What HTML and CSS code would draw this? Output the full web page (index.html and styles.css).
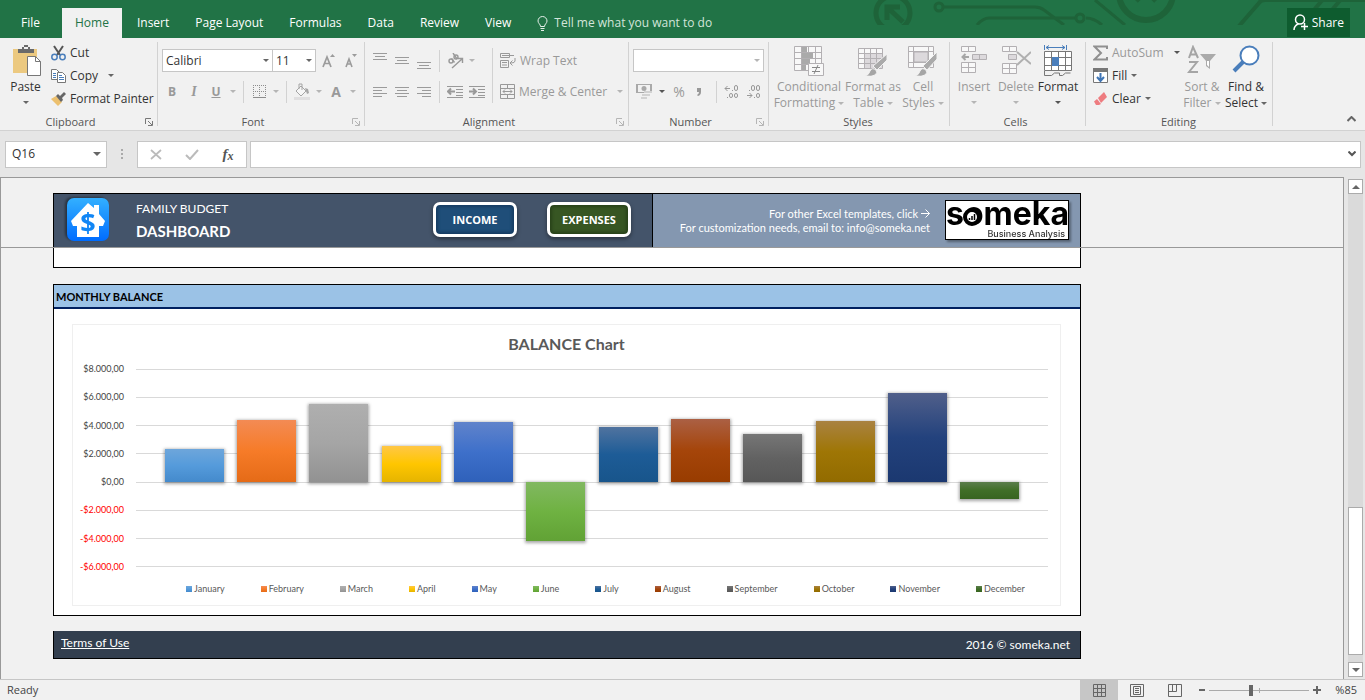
FILE: index.html
```html
<!DOCTYPE html>
<html lang="en">
<head>
<meta charset="utf-8">
<title>Family Budget Dashboard</title>
<link rel="stylesheet" href="styles.css">
</head>
<body>
<header class="titlebar">
  <svg class="circuit" width="495" height="25" viewBox="0 0 495 25" fill="none" stroke="#1e6339" stroke-width="3" aria-hidden="true">
    <circle cx="23" cy="13" r="17" stroke-width="5"/>
    <path d="M17 20V7h13M17 7l16 15" stroke-width="5"/>
    <circle cx="69" cy="7" r="4"/><path d="M73 7h92q5 0 9 3l20 15M107 25q6-7 12-7h87M216 18q8 0 16 7M225 0l30 25M213 18"/>
    <circle cx="210" cy="18" r="4"/>
    <circle cx="276" cy="-7" r="27" stroke-width="6"/><path d="M266 1l6-6M286 1l-6-6" stroke-width="5"/>
    <path d="M369 26l20-23q2-3 6-3h100M444 10l10-12M462 10l10-12" stroke-width="4"/>
  </svg>
  <nav class="tabs">
    <button class="tab tab-file">File</button>
    <button class="tab tab-on">Home</button>
    <button class="tab">Insert</button>
    <button class="tab">Page Layout</button>
    <button class="tab">Formulas</button>
    <button class="tab">Data</button>
    <button class="tab">Review</button>
    <button class="tab">View</button>
    <button class="tab tell">
      <svg width="11" height="15" viewBox="0 0 11 15" fill="none" stroke="#e6f0ea"><path d="M3.500 10.500C3.500 8 1 7.500 1 5a4.500 4.500 0 0 1 9 0c0 2.500-2.500 3-2.500 5.500z"/><path d="M3.500 12.500h4M4 14.500h3"/></svg>
      Tell me what you want to do
    </button>
  </nav>
  <button class="share">
    <svg width="15" height="17" viewBox="0 0 15 17" fill="none" stroke="#fff" stroke-width="1.500"><circle cx="7" cy="5.500" r="4.500"/><path d="M1 16c0-3 2-5 4.500-6.200M8 12.500h7M11.500 9v7"/></svg>
    Share
  </button>
</header>

<section class="ribbon">
  <div class="group g-clip">
    <div class="group-body">
      <button class="big big-paste">
        <svg width="30" height="31" viewBox="0 0 30 31"><path d="M2 4h24v24H2z" fill="#ecc980"/><path d="M7 4h4V2h2V0h4v2h2v2h4v4H7z" fill="#6a6a6a"/><path d="M13 2h4v2h-4z" fill="#f1f1f1"/><path d="M16.500 11.500h8l5 5v14h-13z" fill="#fff" stroke="#777"/><path d="M24.500 11.500v5h5" fill="none" stroke="#777"/></svg>
        Paste<i class="caret"></i>
      </button>
      <div class="stack">
        <button class="line"><svg width="15" height="16" viewBox="0 0 15 16" fill="none"><path d="M3 1l6 9M12 1L6 10" stroke="#555" stroke-width="2"/><circle cx="3.500" cy="12" r="2.700" stroke="#4a7ebb" stroke-width="1.500"/><circle cx="11.500" cy="12" r="2.700" stroke="#4a7ebb" stroke-width="1.500"/></svg>Cut</button>
        <button class="line"><svg width="15" height="14" viewBox="0 0 15 14" fill="#fff" stroke="#777"><path d="M.5.500h5l3 3v7h-8z"/><path d="M6.500 3.500h5l3 3v7h-8z"/><path d="M2 4.500h3M2 6.500h3M2 8.500h3M8 8.500h5M8 10.500h5M8 6.500h3" stroke="#4a7ebb"/></svg>Copy <i class="caret far"></i></button>
        <button class="line"><svg width="15" height="14" viewBox="0 0 15 14"><path d="M0 7l5-3 6 6-4 4z" fill="#ecc06f"/><path d="M5 4l2-2 2 2 4-4 2 2-4 4 1 2-2 2z" fill="#666"/></svg>Format Painter</button>
      </div>
    </div>
    <div class="group-name">Clipboard<svg class="launch" width="8" height="8" viewBox="0 0 8 8" fill="none" stroke="#777"><path d="M.500 6V.500H6M3 3l4 4M7.500 3v4.500H3"/></svg></div>
  </div>

  <div class="group g-font off">
    <div class="group-body col">
      <div class="row">
        <span class="pick pick-font"><select aria-label="Font"><option>Calibri</option></select></span><span class="pick pick-size"><select aria-label="Font size"><option>11</option></select></span>
        <button class="tool tool-A" aria-label="Increase font size"><svg width="16" height="16" viewBox="0 0 16 16"><path d="M2 14L6 4l4 10M3.500 10.500h5" fill="none" stroke="#9b9b9b" stroke-width="1.700"/><path d="M9 4l2.500-3L14 4z" fill="#9b9b9b"/></svg></button>
        <button class="tool" aria-label="Decrease font size"><svg width="16" height="16" viewBox="0 0 16 16"><path d="M3 14l3-8 3 8M4 11h4" fill="none" stroke="#9b9b9b" stroke-width="1.600"/><path d="M9 1l2.500 3L14 1z" fill="#9b9b9b"/></svg></button>
      </div>
      <div class="row">
        <button class="tool bold">B</button><button class="tool ital">I</button><button class="tool bold under">U</button><button class="mini" aria-label="Underline styles"><i class="caret"></i></button>
        <i class="sep"></i>
        <button class="tool" aria-label="Borders"><svg width="13" height="13" viewBox="0 0 13 13" fill="none" stroke="#8d8d8d"><path d="M.500 0v12M6.500 0v12M12.500 0v12M0 .500h13M0 6.500h13" stroke-dasharray="1 1"/><path d="M0 12.500h13"/></svg></button><button class="mini" aria-label="Border styles"><i class="caret"></i></button>
        <i class="sep"></i>
        <button class="tool" aria-label="Fill colour"><svg width="16" height="17" viewBox="0 0 16 17"><path d="M2 8l5-5 5 5-5 5z" fill="#f6f6f6" stroke="#a5a5a5"/><path d="M5 6V1h3v6" fill="none" stroke="#a5a5a5"/><path d="M11 5l3 1 1 4-2 1z" fill="#a5a5a5"/><path d="M0 14h16v3H0z" fill="#e0dfe0"/></svg></button><button class="mini" aria-label="Fill colours"><i class="caret"></i></button>
        <button class="tool bold big-a">A</button><button class="mini" aria-label="Font colours"><i class="caret"></i></button>
      </div>
    </div>
    <div class="group-name">Font<svg class="launch" width="8" height="8" viewBox="0 0 8 8" fill="none" stroke="#b5b5b5"><path d="M.500 6V.500H6M3 3l4 4M7.500 3v4.500H3"/></svg></div>
  </div>

  <div class="group g-align off">
    <div class="group-body">
      <div class="col">
        <div class="row">
          <button class="tool" aria-label="Top align"><svg width="14" height="18" viewBox="0 0 14 18" stroke="#9b9b9b"><path d="M0 1.500h14M2 4.500h10M0 7.500h14"/></svg></button>
          <button class="tool" aria-label="Middle align"><svg width="14" height="18" viewBox="0 0 14 18" stroke="#9b9b9b"><path d="M0 5.500h14M2 8.500h10M0 11.500h14"/></svg></button>
          <button class="tool" aria-label="Bottom align"><svg width="14" height="18" viewBox="0 0 14 18" stroke="#9b9b9b"><path d="M0 10.500h14M2 13.500h10M0 16.500h14"/></svg></button>
          <i class="sep"></i>
          <button class="tool" aria-label="Orientation"><svg width="17" height="16" viewBox="0 0 17 16" fill="none" stroke="#999" stroke-width="1.400"><circle cx="4" cy="8" r="2"/><path d="M4.500 5.500l3 4M6 0l4 6"/><circle cx="9" cy="4" r="2"/><path d="M5 15L15 6M11 5.500h4.500V10"/></svg></button><button class="mini" aria-label="Orientation options"><i class="caret"></i></button>
        </div>
        <div class="row">
          <button class="tool" aria-label="Align left"><svg width="14" height="12" viewBox="0 0 14 12" stroke="#9b9b9b"><path d="M0 1.500h14M0 4.500h9M0 7.500h14M0 10.500h9"/></svg></button>
          <button class="tool" aria-label="Center"><svg width="14" height="12" viewBox="0 0 14 12" stroke="#9b9b9b"><path d="M0 1.500h14M2 4.500h10M0 7.500h14M2 10.500h10"/></svg></button>
          <button class="tool" aria-label="Align right"><svg width="14" height="12" viewBox="0 0 14 12" stroke="#9b9b9b"><path d="M0 1.500h14M5 4.500h9M0 7.500h14M5 10.500h9"/></svg></button>
          <i class="sep"></i>
          <button class="tool" aria-label="Decrease indent"><svg width="16" height="14" viewBox="0 0 16 14" stroke="#999" fill="none"><path d="M0 1.500h16M9 4.500h7M9 7.500h7M9 10.500h7M0 12.500h16"/><path d="M1 6.500h7M4 3.500l-3 3 3 3" stroke-width="2"/></svg></button>
          <button class="tool" aria-label="Increase indent"><svg width="16" height="14" viewBox="0 0 16 14" stroke="#999" fill="none"><path d="M0 1.500h16M9 4.500h7M9 7.500h7M9 10.500h7M0 12.500h16"/><path d="M0 6.500h7M4 3.500l3 3-3 3" stroke-width="2"/></svg></button>
        </div>
      </div>
      <i class="sep tall"></i>
      <div class="col">
        <div class="row"><button class="line"><svg width="16" height="15" viewBox="0 0 16 15" fill="none" stroke="#999"><path d="M.500.500h9v4h-9zM2 2.500h12M.500 7.500h8v7h-8zM2 9.500h5M2 12h5M15 5v3q0 2-4 2M12.500 7.500L10 10l2.500 2.500"/></svg>Wrap Text</button></div>
        <div class="row"><button class="line"><svg width="15" height="15" viewBox="0 0 15 15" fill="none" stroke="#999"><path d="M.500.500h14v14H.500zM.500 4.500h14M.500 10.500h14M7.500.500v4M7.500 10.500v4M3 7.500h9M5 5.500l-2 2 2 2M10 5.500l2 2-2 2"/></svg>Merge &amp; Center <i class="caret far"></i></button></div>
      </div>
    </div>
    <div class="group-name">Alignment<svg class="launch" width="8" height="8" viewBox="0 0 8 8" fill="none" stroke="#b5b5b5"><path d="M.500 6V.500H6M3 3l4 4M7.500 3v4.500H3"/></svg></div>
  </div>

  <div class="group g-num off">
    <div class="group-body col">
      <div class="row"><span class="pick pick-num"><select aria-label="Number format"><option></option></select></span></div>
      <div class="row">
        <button class="tool tool-money" aria-label="Accounting format"><svg width="17" height="17" viewBox="0 0 17 17"><path d="M0 1h16v9H0z" fill="#a9a9a9"/><path d="M2 2h12v7H2z" fill="#f1f1f1"/><circle cx="8" cy="5.500" r="2.500" fill="#a9a9a9"/><path d="M8 8h8v2H8zM6 11h8v2H6zM5 14h6v2H5z" fill="#d2d2d2"/></svg></button><button class="mini dark" aria-label="Accounting formats"><i class="caret"></i></button>
        <button class="tool pct">%</button><button class="tool" aria-label="Comma style"><svg width="10" height="8" viewBox="0 0 10 8"><path d="M1 0h4v4q0 3-3 4L1 7q2-1 2-3H1z" fill="#999"/></svg></button>
        <i class="sep"></i>
        <button class="tool" aria-label="Increase decimal"><svg width="16" height="14" viewBox="0 0 16 14" fill="none" stroke="#999"><path d="M1 3.500h5M3.500 1L1 3.500 3.500 6M3 12.500h1M8 5.500h1"/><rect x="10.500" y=".5" width="3" height="5" rx="1.500"/><rect x="5.500" y="8.500" width="3" height="4" rx="1.500"/><rect x="10.500" y="8.500" width="3" height="4" rx="1.500"/></svg></button>
        <button class="tool" aria-label="Decrease decimal"><svg width="16" height="14" viewBox="0 0 16 14" fill="none" stroke="#999"><path d="M1 10.500h5M3.500 8L6 10.500 3.500 13M3 5.500h1M8 12.500h1"/><rect x="5.500" y=".5" width="3" height="5" rx="1.500"/><rect x="10.500" y=".5" width="3" height="5" rx="1.500"/><rect x="10.500" y="8.500" width="3" height="4" rx="1.500"/></svg></button>
      </div>
    </div>
    <div class="group-name">Number<svg class="launch" width="8" height="8" viewBox="0 0 8 8" fill="none" stroke="#b5b5b5"><path d="M.500 6V.500H6M3 3l4 4M7.500 3v4.500H3"/></svg></div>
  </div>

  <div class="group g-styles off">
    <div class="group-body bigs">
      <button class="big w68"><svg width="30" height="31" viewBox="0 0 30 31" fill="#f8f8f8" stroke="#b3b0b3"><path d="M.500 1.500h27v24H.500zM.500 7.500h27M.500 13.500h27M.500 19.500h27M7.500 1.500v24M14.500 1.500v24M21.500 1.500v24"/><path d="M8 2h5v5H8zM8 8h11v5H8zM8 14h8v5H8zM8 20h4v5H8z" fill="#aaa" stroke="none"/><path d="M14.500 18.500h15v12h-15z"/><path d="M18 22.500h8M18 26.500h8M24 20l-4 9" stroke="#888"/></svg>Conditional<span>Formatting <i class="caret"></i></span></button>
      <button class="big w56"><svg width="30" height="31" viewBox="0 0 30 31" fill="#f8f8f8" stroke="#b3b0b3"><path d="M.500 3.500h24v20H.500z"/><path d="M6 8h18v15H6z" fill="#dcd9dc" stroke="none"/><path d="M.500 8.500h24M.500 13.500h24M.500 18.500h24M6.500 3.500v20M12.500 3.500v20M18.500 3.500v20" fill="none"/><path d="M29 9v6L19 25l-4-4z" fill="#aaa" stroke="#f1f1f1"/><path d="M7 31q4-1 5-5 2-4 6-1 2 3-1 5-3 2-10 1z" fill="#a5a5a5" stroke="#f1f1f1"/></svg>Format as<span>Table <i class="caret"></i></span></button>
      <button class="big w40"><svg width="30" height="31" viewBox="0 0 30 31" fill="#f8f8f8" stroke="#b3b0b3"><path d="M.500 1.500h25v21H.500zM.500 6.500h25M.500 17.500h25M5.500 1.500v21M20.500 1.500v21"/><path d="M6 7h14v10H6z" fill="#dcd9dc"/><path d="M29 7v7L19 25l-4-4z" fill="#aaa" stroke="#f1f1f1"/><path d="M7 31q4-1 5-5 2-4 6-1 2 3-1 5-3 2-10 1z" fill="#a5a5a5" stroke="#f1f1f1"/></svg>Cell<span>Styles <i class="caret"></i></span></button>
    </div>
    <div class="group-name plain">Styles</div>
  </div>

  <div class="group g-cells off">
    <div class="group-body bigs">
      <button class="big w40"><svg width="28" height="31" viewBox="0 0 28 31" fill="#f8f8f8" stroke="#b3b0b3"><path d="M1.500 1.500h14v5h-14zM8.500 1.500v5M1.500 17.500h14v10h-14zM8.500 17.500v10M1.500 22.500h14"/><path d="M12.500 9.500h14v5h-14zM19.500 9.500v5" fill="#dcd9dc"/><path d="M3 12h6M5.500 9L2.500 12l3 3" fill="none" stroke="#a5a5a5" stroke-width="2"/></svg>Insert<i class="caret"></i></button>
      <button class="big w40"><svg width="30" height="31" viewBox="0 0 30 31" fill="#f8f8f8" stroke="#b3b0b3"><path d="M1.500 1.500h14v5h-14zM8.500 1.500v5M1.500 18.500h14v10h-14zM8.500 18.500v10M1.500 23.500h14"/><path d="M7.500 9.500h8v5h-8z" fill="#dcd9dc"/><path d="M16 7l14 12M30 7L16 20" fill="none" stroke="#b0b0b0" stroke-width="2"/></svg>Delete<i class="caret"></i></button>
      <button class="big w40 on"><svg width="28" height="31" viewBox="0 0 28 31" fill="#fff" stroke="#777"><path d="M.500 6.500h27v19H.500zM.500 12.500h27M.500 20.500h27M7.500 6.500v19M14.500 6.500v19M21.500 6.500v19"/><path d="M.500 26v4.500h7l3-2.500h5v2.500h3l3-2.500h5" fill="none"/><path d="M8 12h7v9H8z" fill="#4a7ebb" stroke="none"/><path d="M.500 0v5M22.500 0v5M2 2.500h19M5 .500l-3 2 3 2M18 .500l3 2-3 2" fill="none" stroke="#4a7ebb"/></svg>Format<i class="caret"></i></button>
    </div>
    <div class="group-name plain">Cells</div>
  </div>

  <div class="group g-edit">
    <div class="group-body bigs">
      <div class="stack">
        <button class="line off"><svg width="15" height="16" viewBox="0 0 15 16"><path d="M14 4V1.500H1.500L8 8l-6.500 6.500H14V12" fill="none" stroke="#909090" stroke-width="2"/></svg>AutoSum <i class="caret dk"></i></button>
        <button class="line"><svg width="15" height="15" viewBox="0 0 15 15"><path d="M.500.500h14v14H.500z" fill="#fff" stroke="#777"/><path d="M0 0h15v4H0z" fill="#777"/><path d="M7.500 5v7M4 9l3.500 4L11 9" fill="none" stroke="#3f75b5" stroke-width="2"/></svg>Fill<i class="caret"></i></button>
        <button class="line"><svg width="15" height="14" viewBox="0 0 15 14"><path d="M5 6l6-6 3 5-6 6z" fill="#ee7c80"/><path d="M4 7l4 5-2 1H3L1 9.500z" fill="#ee7c80"/></svg>Clear<i class="caret"></i></button>
      </div>
      <button class="big w42 off"><svg width="30" height="31" viewBox="0 0 30 31"><path d="M2 13L6 2l5 11M3.500 9.500h6M2 17h8L2 27h9" fill="none" stroke="#a5a5a5" stroke-width="2"/><path d="M13 9h16l-6 7v8l-4-3v-5z" fill="#aaa"/><path d="M20 16h2v6l-2-2z" fill="#fff"/></svg>Sort &amp;<span>Filter <i class="caret"></i></span></button>
      <button class="big w42"><svg width="28" height="31" viewBox="0 0 28 31"><path d="M2 26l9-9" stroke="#4a7ebb" stroke-width="4"/><circle cx="17.500" cy="10.500" r="9" fill="#fff" stroke="#4a7ebb" stroke-width="2"/></svg>Find &amp;<span>Select <i class="caret"></i></span></button>
    </div>
    <div class="group-name plain">Editing</div>
  </div>
  <button class="collapse" aria-label="Collapse ribbon"><svg width="9" height="6" viewBox="0 0 9 6"><path d="M.500 5l4-4 4 4" fill="none" stroke="#666" stroke-width="2"/></svg></button>
</section>

<section class="formula">
  <span class="pick namebox"><select aria-label="Name box"><option>Q16</option></select></span>
  <svg class="dots" width="3" height="10" viewBox="0 0 3 10" fill="#aaa"><path d="M0 0h2v2H0zM0 4h2v2H0zM0 8h2v2H0z"/></svg>
  <div class="fx">
    <button aria-label="Cancel"><svg width="12" height="11" viewBox="0 0 12 11"><path d="M1 1l10 9M11 1L1 10" stroke="#bbb" stroke-width="1.700"/></svg></button>
    <button aria-label="Enter"><svg width="14" height="11" viewBox="0 0 14 11"><path d="M1 6l4 4 8-9" fill="none" stroke="#bbb" stroke-width="2"/></svg></button>
    <button class="fx-btn" aria-label="Insert function">f<small>x</small></button>
  </div>
  <div class="entry"><input type="text" aria-label="Formula"><svg width="8" height="6" viewBox="0 0 8 6"><path d="M.500.500L4 4 7.500.500" fill="none" stroke="#555" stroke-width="2"/></svg></div>
</section>

<div class="work">
  <main class="sheet">
    <div class="frozen">
      <div class="banner">
        <div class="banner-main">
          <svg class="house" width="48" height="46" viewBox="0 0 48 46">
            <defs><linearGradient id="sky" x1="0" y1="0" x2="0" y2="1"><stop offset="0" stop-color="#33b0ff"/><stop offset="1" stop-color="#006cff"/></linearGradient></defs>
            <rect x="5" y="1" width="42" height="43" rx="7" fill="url(#sky)"/>
            <path d="M26 6L9 24l2 5h4v11h22V29h4l2-5-6-7V8h-5v3z" fill="#fff"/>
            <text x="26" y="35" text-anchor="middle" class="dollar">$</text>
          </svg>
          <div class="names"><span>FAMILY BUDGET</span><strong>DASHBOARD</strong></div>
          <button class="go go-income">INCOME</button>
          <button class="go go-expense">EXPENSES</button>
        </div>
        <div class="banner-side">
          <p>For other Excel templates, click <svg width="9" height="9" viewBox="0 0 9 9" fill="none" stroke="#fff"><path d="M0 4.500h8.500M4.500.500l4 4-4 4"/></svg><br>For customization needs, email to: info@someka.net</p>
          <svg class="brand" width="125" height="41" viewBox="0 0 125 41">
            <rect x=".5" y=".5" width="123" height="39" fill="#fff" stroke="#000"/>
            <text x="1" y="25" class="brand-word">someka</text>
            <circle cx="27" cy="17" r="7" fill="#fff" stroke="#000" stroke-width="4"/>
            <path d="M24.500 18v2M27 16v4M29.500 14v6" stroke="#000" stroke-width="1.500"/>
            <text x="120" y="37" text-anchor="end" class="brand-sub">Business Analysis</text>
          </svg>
        </div>
      </div>
    </div>
    <div class="strip"></div>

    <section class="card">
      <h2>MONTHLY BALANCE</h2>
      <figure class="chart">
        <figcaption>BALANCE Chart</figcaption>
        <div class="plot">
          <div class="axis"><span>$8.000,00</span><span>$6.000,00</span><span>$4.000,00</span><span>$2.000,00</span><span>$0,00</span><span class="neg">-$2.000,00</span><span class="neg">-$4.000,00</span><span class="neg">-$6.000,00</span></div>
          <div class="area">
            <div class="lines"><i></i><i></i><i></i><i></i><i></i><i></i><i></i></div>
            <div class="bars">
              <div><b class="bar jan" style="height:29%"></b></div>
              <div><b class="bar feb" style="height:55%"></b></div>
              <div><b class="bar mar" style="height:69%"></b></div>
              <div><b class="bar apr" style="height:32%"></b></div>
              <div><b class="bar may" style="height:53%"></b></div>
              <div><b class="bar jun below" style="height:69%"></b></div>
              <div><b class="bar jul" style="height:49%"></b></div>
              <div><b class="bar aug" style="height:56%"></b></div>
              <div><b class="bar sep9" style="height:43%"></b></div>
              <div><b class="bar oct" style="height:54%"></b></div>
              <div><b class="bar nov" style="height:79%"></b></div>
              <div><b class="bar dec12 below" style="height:20%"></b></div>
            </div>
          </div>
        </div>
        <ul class="legend">
          <li><i class="jan"></i>January</li><li><i class="feb"></i>February</li><li><i class="mar"></i>March</li><li><i class="apr"></i>April</li><li><i class="may"></i>May</li><li><i class="jun"></i>June</li><li><i class="jul"></i>July</li><li><i class="aug"></i>August</li><li><i class="sep9"></i>September</li><li><i class="oct"></i>October</li><li><i class="nov"></i>November</li><li><i class="dec12"></i>December</li>
        </ul>
      </figure>
    </section>

    <footer class="foot"><a href="#terms">Terms of Use</a><span>2016 © someka.net</span></footer>
  </main>
  <aside class="scroll">
    <button aria-label="Scroll up"><i class="up"></i></button>
    <div class="track"><div class="thumb"></div></div>
    <button aria-label="Scroll down"><i class="down"></i></button>
  </aside>
</div>

<footer class="status">
  <span class="ready">Ready</span>
  <button class="view view-on" aria-label="Normal view"><svg width="13" height="13" viewBox="0 0 13 13" fill="none" stroke="#666"><path d="M.500.500h12v12H.500zM.500 4.500h12M.500 8.500h12M4.500.500v12M8.500.500v12"/></svg></button>
  <button class="view" aria-label="Page layout view"><svg width="14" height="13" viewBox="0 0 14 13" fill="none" stroke="#666"><path d="M.500.500h13v12H.500zM3.500 2.500h7v8h-7zM5 4.500h4M5 6.500h4M5 8.500h4"/></svg></button>
  <button class="view" aria-label="Page break view"><svg width="14" height="13" viewBox="0 0 14 13" fill="none" stroke="#666"><path d="M.500.500h13v12H.500zM.500 7.500h8v-7M4.500.500v7"/></svg></button>
  <button class="zoom" aria-label="Zoom out"><svg width="8" height="10" viewBox="0 0 8 10"><path d="M1 4h6v2H1z" fill="#666"/></svg></button>
  <input class="slider" type="range" min="0" max="100" value="41" aria-label="Zoom">
  <button class="zoom" aria-label="Zoom in"><svg width="8" height="8" viewBox="0 0 8 8"><path d="M0 3h3V0h2v3h3v2H5v3H3V5H0z" fill="#666"/></svg></button>
  <span class="percent">%85</span>
</footer>
</body>
</html>
```
FILE: styles.css
```css
* { box-sizing: border-box; }
body {
  margin: 0;
  height: 100vh;
  display: flex;
  flex-direction: column;
  background: #f1f1f1;
  color: #333;
  font: 12px/16px "Open Sans", "Noto Sans", sans-serif;
  overflow: hidden;
}
button {
  margin: 0;
  padding: 0;
  border: 0;
  background: none;
  color: inherit;
  font: inherit;
}
i { font-style: normal; }
svg { flex: none; }

/* title bar */
.titlebar {
  position: relative;
  display: flex;
  justify-content: space-between;
  padding: 8px 15px 0 8px;
  background: #217346;
  color: #fff;
}
.circuit { position: absolute; top: 0; right: 0; }
.tabs { display: flex; height: 30px; }
.tab { padding: 0 13px; white-space: nowrap; }
.tab-file { margin-right: 9px; }
.tab-on { margin-right: 2px; background: #f1f1f1; color: #217346; }
.tell { display: flex; align-items: center; gap: 6px; color: #d3e5da; }
.share {
  position: relative;
  display: flex;
  align-items: center;
  gap: 4px;
  height: 29px;
  padding: 0 6px;
  background: #0e5c2f;
}

/* ribbon */
.ribbon {
  display: flex;
  height: 93px;
  padding: 4px 0;
  border-bottom: 1px solid #d2d2d2;
}
.group {
  display: flex;
  flex-direction: column;
  height: 84px;
  border-right: 1px solid #d2d2d2;
}
.group-body { display: flex; flex: none; height: 72px; }
.group-name {
  position: relative;
  flex: none;
  height: 16px;
  padding-right: 20px;
  text-align: center;
  font-size: 11px;
  color: #555;
}
.g-clip .group-name { padding-right: 16px; }
.plain { padding-right: 8px; }
.launch { position: absolute; right: 4px; bottom: 4px; }
.g-clip { width: 158px; }
.g-font { width: 207px; padding-left: 4px; }
.g-align { width: 264px; padding-left: 5px; }
.g-num { width: 140px; padding-left: 4px; }
.g-styles { width: 181px; padding-left: 6px; }
.g-cells { width: 136px; padding-left: 4px; }
.g-edit { width: 187px; padding-left: 7px; }
.off { color: #999; }
.on { color: #333; }
.col { display: flex; flex-direction: column; padding-top: 3px; }
.row { display: flex; align-items: center; gap: 2px; height: 31px; }
.tool { display: flex; align-items: center; justify-content: center; width: 20px; height: 22px; }
.tool-A { margin-left: 1px; }
.tool-money { width: 22px; }
.mini { display: flex; align-items: center; justify-content: center; width: 10px; height: 22px; }
.bold { font-weight: 700; }
.big-a { font-size: 14px; }
.ital { font-style: italic; font-family: "Liberation Serif", serif; font-weight: 700; font-size: 14px; }
.under { text-decoration: underline; }
.pct { font-size: 14px; }
.sep { width: 1px; height: 22px; margin: 0 3px; background: #d2d2d2; }
.tall { height: 55px; margin: 6px 7px 0 5px; }
.caret {
  display: inline-block;
  width: 0;
  height: 0;
  border: 3px solid transparent;
  border-top-color: #666;
  border-bottom: 0;
  vertical-align: middle;
}
.off .caret { border-top-color: #b5b5b5; }
.on .caret, .dark .caret, .off .dk { border-top-color: #555; }
.far, .dk { margin-left: 6px; }
.stack { display: flex; flex-direction: column; margin-top: -1px; }
.line { display: flex; align-items: center; gap: 4px; height: 23px; white-space: nowrap; }
.big {
  display: flex;
  flex-direction: column;
  align-items: center;
  height: 70px;
  padding-top: 3px;
  white-space: nowrap;
}
.big svg { margin-bottom: 3px; }
.big > .caret { margin-top: 6px; }
.big-paste { width: 51px; }
.bigs { gap: 2px; }
.w68 { width: 68px; }
.w56 { width: 56px; }
.w40 { width: 40px; }
.w42 { width: 42px; }
.g-edit .stack { width: 86px; }
.collapse { margin-left: auto; align-self: flex-end; padding: 0 9px 0 0; }

.pick { position: relative; display: block; }
.pick::after {
  content: "";
  position: absolute;
  right: 4px;
  top: 50%;
  margin-top: -2px;
  border: 3px solid transparent;
  border-top-color: #666;
  border-bottom: 0;
}
.pick select {
  display: block;
  width: 100%;
  height: 23px;
  padding: 0 3px;
  border: 1px solid #c6c6c6;
  border-radius: 0;
  background: #fff;
  color: #333;
  font: inherit;
  appearance: none;
}
.pick-font { width: 111px; margin-right: -2px; }
.pick-font + .pick { margin-left: -1px; }
.pick-size { width: 44px; }
.pick-num { width: 131px; }
.pick-num::after { border-top-color: #b5b5b5; }

/* formula bar */
.formula {
  display: flex;
  align-items: center;
  height: 46px;
  padding: 0 4px 0 5px;
  background: #e6e6e6;
}
.namebox { width: 102px; }
.namebox::after { right: 6px; border-width: 4px 4px 0; }
.namebox select, .fx, .entry { height: 27px; border: 1px solid #c6c6c6; background: #fff; }
.namebox select { padding: 0 6px; }
.dots { margin: 0 13px 0 14px; }
.fx { display: flex; width: 110px; margin-right: 3px; }
.fx button { display: flex; flex: 1; align-items: center; justify-content: center; }
.fx .fx-btn { font: italic 700 15px/20px "Liberation Serif", serif; color: #555; }
.fx-btn small { font-size: 12px; padding-top: 3px; }
.entry { display: flex; flex: 1; align-items: center; padding-right: 4px; }
.entry input { flex: 1; height: 24px; border: 0; background: none; font: inherit; }

/* worksheet */
.work { display: flex; flex: 1; min-height: 0; background: #e6e6e6; }
.sheet {
  flex: 1;
  border: solid #999;
  border-width: 1px 1px 0 1px;
  background: #f1f1f1;
  font-family: Lato, "Open Sans", sans-serif;
}
.frozen { padding: 15px 262px 0 52px; border-bottom: 1px solid #999; }
.banner {
  display: grid;
  grid-template-columns: 599fr 427fr;
  height: 54px;
  border: 1px solid #000;
  border-bottom: 0;
  color: #fff;
}
.banner-main {
  display: flex;
  align-items: center;
  padding: 0 21px 2px 8px;
  border-right: 1px solid #000;
  background: #44546a;
}
.house { filter: drop-shadow(-2px -1px 1px rgba(0, 0, 0, .4)); }
.dollar { font: 700 27px "Open Sans", sans-serif; fill: #1186f5; }
.names { display: flex; flex-direction: column; flex: 1; padding-left: 26px; font-size: 12px; line-height: 22px; }
.names strong { font-size: 15px; }
.go {
  width: 84px;
  height: 35px;
  border: 3px solid #fff;
  border-radius: 7px;
  color: #fff;
  font-family: "Open Sans", sans-serif;
  font-size: 11px;
  font-weight: 700;
}
.go-income { margin-right: 30px; background: #1f4e79; box-shadow: 0 2px 4px rgba(0, 0, 0, .4), inset 0 0 3px 2px #173d62; }
.go-expense { background: #375623; box-shadow: 0 2px 4px rgba(0, 0, 0, .4), inset 0 0 3px 2px #29431a; }
.banner-side {
  display: flex;
  align-items: center;
  justify-content: flex-end;
  gap: 15px;
  padding-right: 10px;
  background: #8497b0;
}
.banner-side p { margin: 0; text-align: right; font-size: 11px; line-height: 14px; white-space: nowrap; }
.brand { filter: drop-shadow(2px 2px 1px rgba(0, 0, 0, .35)); }
.brand-word { font: 700 32px Inter, sans-serif; fill: #000; }
.brand-sub { font: 500 9px Inter, sans-serif; fill: #333; }
.strip, .card, .foot { margin: 0 262px 0 52px; border: 1px solid #000; }
.strip { height: 20px; border-top: 0; background: #fff; }
.card { margin-top: 16px; background: #fff; }
.card h2 {
  margin: 0;
  padding: 1px 2px 0;
  height: 24px;
  border-bottom: 2px solid #002060;
  background: #9bc2e6;
  color: #000;
  font-size: 11px;
  line-height: 22px;
}
.chart {
  margin: 15px 19px 9px 18px;
  padding: 10px 12px 10px 6px;
  border: 1px solid #efefef;
}
.chart figcaption { padding-left: 6px; text-align: center; font-size: 16px; line-height: 18px; font-weight: 700; color: #595959; }
.plot { display: flex; margin-top: 16px; }
.axis {
  display: flex;
  flex-direction: column;
  justify-content: space-between;
  width: 45px;
  margin: -5px 12px -5px 0;
  text-align: right;
  font-size: 9px;
  line-height: 10px;
  color: #444;
}
.axis .neg { color: #f00; }
.area { display: grid; flex: 1; height: 198px; }
.lines, .bars { grid-area: 1 / 1; }
.lines { display: flex; flex-direction: column; border-top: 1px solid #d9d9d9; }
.lines i { flex: 1; border-bottom: 1px solid #d9d9d9; }
.bars { display: grid; grid-template-columns: repeat(12, 1fr); padding: 0 22px; }
.bars div { display: grid; grid-template-rows: 4fr 3fr; justify-items: center; }
.bar { align-self: end; width: 82%; box-shadow: 0 1px 3px 1px rgba(0, 0, 0, .35); }
.below { grid-row: 2; align-self: start; }
.jan { background: linear-gradient(#6ea6db, #559bdb 50%, #448acc); }
.feb { background: linear-gradient(#f38b54, #f67b28 50%, #e56b17); }
.mar { background: linear-gradient(#afafaf, #a5a5a5 50%, #929292); }
.apr { background: linear-gradient(#ffc746, #ffc600 50%, #e5b400); }
.may { background: linear-gradient(#6083cb, #3e70ca 50%, #2f61ba); }
.jun { background: linear-gradient(#81b861, #6fb242 50%, #61a235); }
.jul { background: linear-gradient(#50739f, #1d5c97 50%, #18558b); }
.aug { background: linear-gradient(#ab6044, #a5450a 50%, #983c00); }
.sep9 { background: linear-gradient(#767676, #626262 50%, #575757); }
.oct { background: linear-gradient(#a98242, #9f7605 50%, #926b00); }
.nov { background: linear-gradient(#505f8a, #23427d 50%, #1b3870); }
.dec12 { background: linear-gradient(#5b7d4c, #406e27 50%, #386420); }
.legend {
  display: flex;
  justify-content: center;
  gap: 36px;
  margin: 16px 0 0 84px;
  padding: 0;
  list-style: none;
  font-size: 9px;
  line-height: 12px;
  color: #595959;
}
.legend li { display: flex; align-items: center; gap: 2px; }
.legend i { width: 6px; height: 6px; }
.foot {
  display: flex;
  justify-content: space-between;
  align-items: center;
  height: 28px;
  margin-top: 15px;
  padding: 0 10px 0 7px;
  border-top: 0;
  background: #333f4f;
  color: #fff;
}
.foot a { color: #fff; padding-bottom: 3px; }

/* scroll bar */
.scroll { display: flex; flex-direction: column; width: 21px; padding: 2px 2px 2px 4px; }
.scroll button {
  display: flex;
  align-items: center;
  justify-content: center;
  width: 15px;
  height: 15px;
  border: 1px solid #ababab;
  background: #fff;
}
.up, .down { border: 4px solid transparent; }
.up { border-bottom-color: #666; border-top: 0; }
.down { border-top-color: #666; border-bottom: 0; }
.track {
  display: flex;
  flex: 1;
  flex-direction: column;
  justify-content: flex-end;
  width: 15px;
  padding-bottom: 7px;
  background: #dadada;
}
.thumb { height: 32%; border: 1px solid #ababab; background: #fff; }

/* status bar */
.status {
  display: flex;
  align-items: center;
  height: 21px;
  padding: 0 8px 0 7px;
  border-top: 1px solid #c6c6c6;
  color: #444;
  font-size: 11px;
}
.ready { flex: 1; }
.view { display: flex; align-items: center; justify-content: center; width: 38px; height: 20px; }
.view-on { background: #c6c6c6; }
.zoom { display: flex; align-items: center; justify-content: center; width: 12px; height: 20px; }
.view + .zoom { margin-left: 2px; }
.slider { appearance: none; width: 100px; height: 14px; margin: 0 2px 0 1px;
  background: linear-gradient(#aaa, #aaa) center / 100% 1px no-repeat, linear-gradient(#aaa, #aaa) center / 1px 5px no-repeat; }
.slider::-webkit-slider-thumb { appearance: none; width: 4px; height: 11px; background: #666; }
.percent { padding-left: 12px; }
```
